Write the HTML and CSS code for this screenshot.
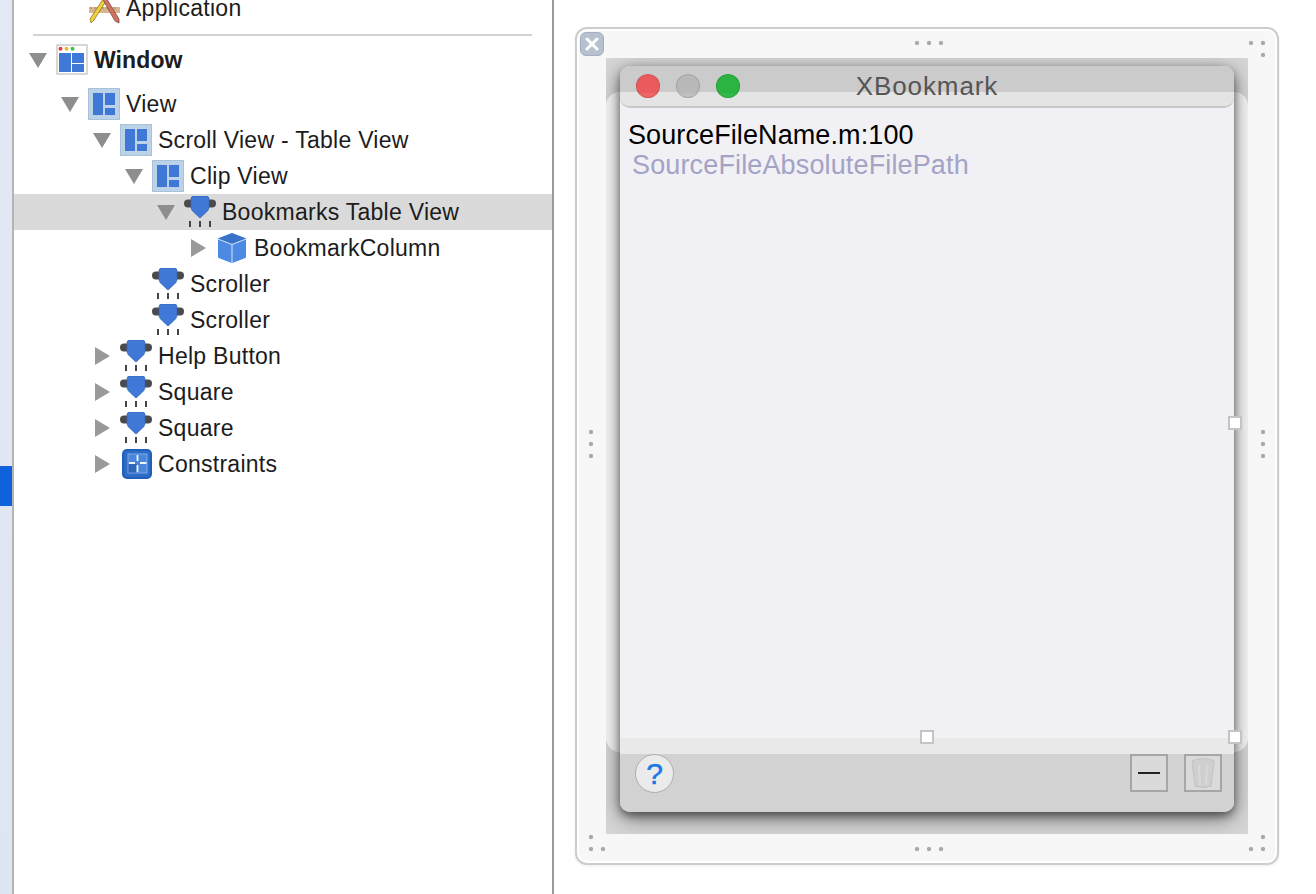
FILE: index.html
```html
<!DOCTYPE html>
<html>
<head>
<meta charset="utf-8">
<title>XBookmark</title>
<link rel="stylesheet" href="styles.css">
</head>
<body>
<svg class="defs" width="0" height="0">
  <symbol id="i-view" viewBox="0 0 32 32">
    <rect x="0.5" y="0.5" width="31" height="31" fill="#bcd2e6" stroke="#a8c2d8"/>
    <rect x="5" y="5" width="10" height="22" fill="#3f78d6"/>
    <rect x="17" y="5" width="10" height="12" fill="#3f78d6"/>
    <rect x="17" y="20" width="10" height="7" fill="#3f78d6"/>
  </symbol>
  <symbol id="i-control" viewBox="0 0 32 32">
    <rect x="0" y="3.500" width="32" height="8" rx="4" fill="#4a4a4c"/>
    <path d="M10 0h12q3 0 3 3v8q0 3-2.500 5L16 22l-6.500-6Q7 14 7 11V3q0-3 3-3z" fill="#3f78d6" stroke="#3568b8" stroke-width=".8"/>
    <rect x="5" y="25" width="2" height="6" fill="#444"/>
    <rect x="15" y="25" width="2" height="6" fill="#444"/>
    <rect x="25" y="25" width="2" height="6" fill="#444"/>
  </symbol>
</svg>

<div class="strip"><div class="strip-sel"></div></div>

<div class="outline">
  <div class="row depth-1">
    <span class="twist"></span>
    <svg class="icon" viewBox="0 0 32 32">
      <rect x="1" y="15" width="31" height="6" fill="#d6b68c"/>
      <path d="M3 15v2M7 15v2M11 15v2M15 15v2M19 15v2M23 15v2M27 15v2" stroke="#a58a62"/>
      <path d="M17 4l3 2L6 28l-3 3-1-4z" fill="#f1cf3a" stroke="#7d6a1e" stroke-width=".7"/>
      <path d="M14 6l3-2 14 23v4l-4-2z" fill="#cf7464" stroke="#7b3a32" stroke-width=".7"/>
    </svg>
    <span class="label">Application</span>
  </div>
  <div class="sep"></div>
  <div class="row row-window depth-0">
    <span class="twist open"></span>
    <svg class="icon" viewBox="0 0 32 32">
      <rect x="1" y="1" width="30" height="29" fill="#fff" stroke="#ccc" stroke-width="1.500"/>
      <circle cx="4.500" cy="4.800" r="2" fill="#e8383d"/>
      <circle cx="10.500" cy="4.800" r="2" fill="#eab92d"/>
      <circle cx="16.500" cy="4.800" r="2" fill="#3fc24a"/>
      <rect x="3" y="9" width="12" height="19" fill="#3f78d6"/>
      <rect x="16" y="9" width="12" height="10" fill="#3f78d6"/>
      <rect x="16" y="20" width="12" height="8" fill="#3f78d6"/>
    </svg>
    <span class="label bold">Window</span>
  </div>
  <div class="row depth-1">
    <span class="twist open"></span>
    <svg class="icon"><use href="#i-view"/></svg>
    <span class="label">View</span>
  </div>
  <div class="row depth-2">
    <span class="twist open"></span>
    <svg class="icon"><use href="#i-view"/></svg>
    <span class="label">Scroll View - Table View</span>
  </div>
  <div class="row depth-3">
    <span class="twist open"></span>
    <svg class="icon"><use href="#i-view"/></svg>
    <span class="label">Clip View</span>
  </div>
  <div class="row selected depth-4">
    <span class="twist open"></span>
    <svg class="icon"><use href="#i-control"/></svg>
    <span class="label">Bookmarks Table View</span>
  </div>
  <div class="row depth-5">
    <span class="twist closed"></span>
    <svg class="icon" viewBox="0 0 32 32">
      <path d="M16 2L29 7v18l-13 5-13-5V7z" fill="#4c8ae4" stroke="#4c8ae4" stroke-width="2" stroke-linejoin="round"/>
      <path d="M16 2L29 7 16 12 3 7z" fill="#3a72c9" stroke="#3a72c9" stroke-width="1" stroke-linejoin="round"/>
      <path d="M2 7l14 5.500L30 7M16 12.500V31" fill="none" stroke="#d5e4f8" stroke-width="1"/>
    </svg>
    <span class="label">BookmarkColumn</span>
  </div>
  <div class="row depth-3">
    <span class="twist"></span>
    <svg class="icon"><use href="#i-control"/></svg>
    <span class="label">Scroller</span>
  </div>
  <div class="row depth-3">
    <span class="twist"></span>
    <svg class="icon"><use href="#i-control"/></svg>
    <span class="label">Scroller</span>
  </div>
  <div class="row depth-2">
    <span class="twist closed"></span>
    <svg class="icon"><use href="#i-control"/></svg>
    <span class="label">Help Button</span>
  </div>
  <div class="row depth-2">
    <span class="twist closed"></span>
    <svg class="icon"><use href="#i-control"/></svg>
    <span class="label">Square</span>
  </div>
  <div class="row depth-2">
    <span class="twist closed"></span>
    <svg class="icon"><use href="#i-control"/></svg>
    <span class="label">Square</span>
  </div>
  <div class="row depth-2">
    <span class="twist closed"></span>
    <svg class="icon" viewBox="0 0 32 32">
      <rect x="2" y="1" width="30" height="30" rx="5" fill="#1f5fb8"/>
      <rect x="4" y="3" width="26" height="26" rx="3" fill="#2f6cc6"/>
      <rect x="8" y="6" width="19" height="19" fill="#4a86dc" stroke="#7aa8e8" stroke-width="1"/>
      <rect x="8.500" y="16" width="8" height="8.500" fill="#2f66ba"/>
      <path d="M17.500 7v6M17.500 17v7M9 15h6M20 15h6.500" stroke="#eef4fc" stroke-width="1.800"/>
    </svg>
    <span class="label">Constraints</span>
  </div>
</div>

<div class="stage">
  <div class="frame">
    <div class="wall">
      <div class="wall-light"></div>
      <div class="window">
        <div class="titlebar">
          <div class="lights">
            <span class="light red"></span>
            <span class="light gray"></span>
            <span class="light green"></span>
          </div>
          <div class="title">XBookmark</div>
        </div>
        <div class="content">
          <div class="file-name">SourceFileName.m:100</div>
          <div class="file-path">SourceFileAbsoluteFilePath</div>
        </div>
        <div class="band"></div>
        <div class="bottombar">
          <span class="help">?</span>
          <span class="square"><span class="minus"></span></span>
          <span class="square">
            <svg class="trash" viewBox="0 0 26 32">
              <path d="M2 4q11-5 22 0l-3 25q-8 3-16 0z" fill="#cfcfcf" stroke="#c2c2c2"/>
              <path d="M9 8l1 20M17 8l-1 20" stroke="#d9d9d9" stroke-width="2"/>
            </svg>
          </span>
        </div>
      </div>
    </div>

    <div class="close-badge">
      <svg viewBox="0 0 14 14" width="14" height="14"><path d="M2 2l10 10M12 2L2 12" stroke="#fff" stroke-width="3" stroke-linecap="round"/></svg>
    </div>

    <div class="dots dots-h pos-top"><i></i><i></i><i></i></div>
    <div class="dots dots-h pos-bottom"><i></i><i></i><i></i></div>
    <div class="dots dots-v pos-left"><i></i><i></i><i></i></div>
    <div class="dots dots-v pos-right"><i></i><i></i><i></i></div>
    <div class="dots dots-c pos-tr"><i></i><i></i><b></b><i></i></div>
    <div class="dots dots-c pos-bl"><i></i><b></b><i></i><i></i></div>
    <div class="dots dots-c pos-br"><b></b><i></i><i></i><i></i></div>

    <div class="handle h-right"></div>
    <div class="handle h-bottom"></div>
    <div class="handle h-corner"></div>
  </div>
</div>
</body>
</html>
```

FILE: styles.css
```css
html, body { margin:0; padding:0; height:100%; background:#fff; overflow:hidden; }
body { display:flex; height:894px; font-family:"Liberation Sans", Arial, sans-serif; color:#1c1c1c; }
.defs { position:absolute; }

/* far left strip */
.strip { width:12px; flex:none; border-right:2px solid #b4b4b4; background:linear-gradient(#e4e8f4, #dde6f1); }
.strip-sel { height:40px; margin-top:466px; background:#0f62dc; }

/* outline */
.outline { width:538px; flex:none; margin-top:-10px; border-right:2px solid #9a9a9a; }
.row { height:36px; display:flex; align-items:center; font-size:23px; letter-spacing:.27px; }
.row-window { margin-bottom:8px; letter-spacing:.1px; }
.selected { background:#dadada; }
.depth-0 { padding-left:10px; }
.depth-1 { padding-left:42px; }
.depth-2 { padding-left:74px; }
.depth-3 { padding-left:106px; }
.depth-4 { padding-left:138px; }
.depth-5 { padding-left:170px; }
.sep { height:2px; margin:8px 20px 6px 19px; background:#d3d3d3; }
.twist { width:32px; height:20px; flex:none; position:relative; }
.twist.open::before { content:""; position:absolute; left:5px; top:3px; border-style:solid; border-width:15px 9px 0; border-color:#8e8e8e transparent transparent; }
.twist.closed::before { content:""; position:absolute; left:7px; top:1px; border-style:solid; border-width:9px 0 9px 15px; border-color:transparent transparent transparent #999; }
.icon { width:32px; height:32px; flex:none; overflow:visible; }
.label { margin-left:6px; white-space:nowrap; }
.bold { font-weight:bold; }

/* canvas */
.stage { flex:1; display:flex; padding:27px 37px 29px 21px; }
.frame { flex:1; position:relative; display:flex; padding:29px; border:2px solid #cdcdcd; border-radius:12px; background:#f7f7f7; box-shadow:inset 0 0 0 2px #fff, 0 1px 3px rgba(0,0,0,.08); }
.wall { flex:1; position:relative; overflow:hidden; background:#d6d6d6; }
.wall-light { position:absolute; left:0; right:0; top:34px; bottom:82px; border-radius:14px; background:#f7f7f7; }

.window { position:absolute; left:14px; top:8px; width:614px; height:746px; display:flex; flex-direction:column; border-radius:10px; background:#f0f0f5; box-shadow:0 4px 8px rgba(0,0,0,.45), 0 6px 22px rgba(0,0,0,.45); }
.titlebar { height:40px; flex:none; display:grid; grid-template-columns:1fr auto 1fr; align-items:center; border-bottom:2px solid #c8c8c8; border-radius:10px; background:linear-gradient(#cbcbcb 26px, #e4e4e4 26px); }
.lights { display:flex; gap:16px; padding-left:16px; }
.light { width:24px; height:24px; box-sizing:border-box; border-radius:50%; border:1px solid rgba(0,0,0,.12); }
.red { background:linear-gradient(#e95b5c 18px, #ee6666 18px); }
.gray { background:linear-gradient(#b9b9b9 18px, #c0c0c0 18px); }
.green { background:linear-gradient(#2bb442 18px, #32ba48 18px); }
.title { font-size:26px; letter-spacing:.9px; color:#555; }

.content { flex:1; padding:12px 8px 0; font-size:27px; line-height:30px; letter-spacing:.1px; }
.file-name { color:#000; }
.file-path { margin-left:4px; color:#a3a3c6; letter-spacing:.14px; }

.band { height:16px; flex:none; background:#e9e9e9; }
.bottombar { height:58px; flex:none; display:flex; align-items:flex-start; gap:16px; padding:0 12px 0 15px; border-radius:0 0 10px 10px; background:#d2d2d2; }
.help { width:39px; height:39px; box-sizing:border-box; display:flex; align-items:center; justify-content:center; margin-right:auto; border:1.5px solid #aeaeae; border-radius:50%; background:#ebebeb; color:#1a78e6; font-size:30px; line-height:36px; -webkit-text-stroke:.5px #1a78e6; }
.square { width:38px; height:38px; box-sizing:border-box; display:flex; align-items:center; justify-content:center; border:2px solid #a6a6a6; background:#dadada; }
.minus { width:22px; height:2px; background:#222; }
.trash { width:26px; height:32px; }

.close-badge { position:absolute; left:3px; top:3px; width:24px; height:24px; box-sizing:border-box; display:flex; align-items:center; justify-content:center; border:1.5px solid #a3afc0; border-radius:6px; background:#b6c1d0; }

.dots { position:absolute; display:grid; gap:8px; }
.dots i { width:4px; height:4px; border-radius:50%; background:#a8a8a8; box-shadow:0 0 1px #bbb; }
.dots-h { grid-template-columns:repeat(3, 4px); }
.dots-v { grid-template-columns:4px; }
.dots-c { grid-template-columns:repeat(2, 4px); }
.pos-top { left:338px; top:12px; }
.pos-bottom { left:338px; top:818px; }
.pos-left { left:12px; top:401px; }
.pos-right { left:684px; top:401px; }
.pos-tr { left:672px; top:12px; }
.pos-bl { left:12px; top:806px; }
.pos-br { left:672px; top:806px; }

.handle { position:absolute; width:14px; height:14px; box-sizing:border-box; border:2px solid #c4c4c4; background:#fff; }
.h-right { left:651px; top:387px; }
.h-bottom { left:343px; top:701px; }
.h-corner { left:651px; top:701px; }
```
